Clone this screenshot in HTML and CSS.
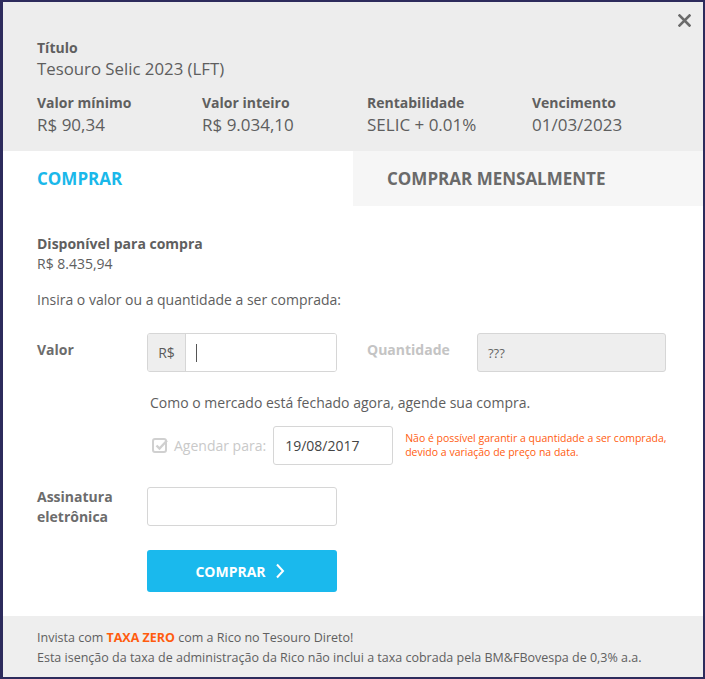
FILE: index.html
```html
<!DOCTYPE html>
<html lang="pt-BR">
<head>
<meta charset="utf-8">
<title>Comprar título</title>
<link rel="stylesheet" href="styles.css">
</head>
<body>
<div class="modal">
  <header class="head">
    <button class="close" aria-label="Fechar">
      <svg width="13" height="13" viewBox="0 0 13 13"><path d="M1.5 1.5 L11.5 11.5 M11.5 1.5 L1.5 11.5" stroke="#6b6b6b" stroke-width="2.6" stroke-linecap="square"/></svg>
    </button>
    <div class="label">Título</div>
    <div class="title">Tesouro Selic 2023 (LFT)</div>
    <div class="stats">
      <div class="stat"><div class="label">Valor mínimo</div><div class="value">R$ 90,34</div></div>
      <div class="stat"><div class="label">Valor inteiro</div><div class="value">R$ 9.034,10</div></div>
      <div class="stat"><div class="label">Rentabilidade</div><div class="value">SELIC + 0.01%</div></div>
      <div class="stat"><div class="label">Vencimento</div><div class="value">01/03/2023</div></div>
    </div>
  </header>
  <nav class="tabs">
    <div class="tab active">COMPRAR</div>
    <div class="tab">COMPRAR MENSALMENTE</div>
  </nav>
  <section class="body">
    <div class="label">Disponível para compra</div>
    <div class="text">R$ 8.435,94</div>
    <p class="intro">Insira o valor ou a quantidade a ser comprada:</p>
    <div class="row valor-row">
      <div class="field-label">Valor</div>
      <div class="input-group">
        <span class="addon">R$</span>
        <span class="input"><span class="caret"></span></span>
      </div>
      <div class="field-label qty-label">Quantidade</div>
      <div class="input disabled">???</div>
    </div>
    <p class="notice">Como o mercado está fechado agora, agende sua compra.</p>
    <div class="schedule">
      <span class="check">
        <svg width="17" height="17" viewBox="0 0 17 17"><rect x="1" y="2" width="13" height="13" rx="2" fill="none" stroke="#d0d0d0" stroke-width="2"/><path d="M4.5 8.5 L7.5 11.5 L15 3.5" fill="none" stroke="#d0d0d0" stroke-width="2.4"/></svg>
        Agendar para:
      </span>
      <div class="input date">19/08/2017</div>
      <p class="warn">Não é possível garantir a quantidade a ser comprada,<br>devido a variação de preço na data.</p>
    </div>
    <div class="row sign-row">
      <div class="field-label">Assinatura<br>eletrônica</div>
      <div class="input sign"></div>
    </div>
    <div class="row">
      <div class="field-label"></div>
      <button class="buy">COMPRAR
        <svg width="10" height="16" viewBox="0 0 10 16"><path d="M2 1.5 L8 8 L2 14.5" fill="none" stroke="#fff" stroke-width="2"/></svg>
      </button>
    </div>
  </section>
  <footer class="foot">
    <p>Invista com <strong>TAXA ZERO</strong> com a Rico no Tesouro Direto!</p>
    <p>Esta isenção da taxa de administração da Rico não inclui a taxa cobrada pela BM&amp;FBovespa de 0,3% a.a.</p>
  </footer>
</div>
</body>
</html>
```
FILE: styles.css
```css
html, body {
  margin: 0;
  padding: 0;
  background: #2d2b5c;
}
body {
  padding: 2px 2px 2px 3px;
  font-family: "Open Sans", "Liberation Sans", sans-serif;
  font-stretch: 96%;
  color: #5e5e5e;
}
.modal {
  width: 700px;
  height: 675px;
  background: #fff;
  display: flex;
  flex-direction: column;
  box-sizing: border-box;
  overflow: hidden;
}
.head {
  position: relative;
  background: #ededed;
  padding: 36px 34px 0 34px;
  height: 149px;
  box-sizing: border-box;
}
.close {
  position: absolute;
  right: 12px;
  top: 12px;
  border: 0;
  background: none;
  padding: 0;
  line-height: 0;
}
.label {
  font-weight: 700;
  font-size: 14px;
  line-height: 20px;
  color: #5f5f5f;
}
.title {
  font-size: 16.8px;
  line-height: 24px;
  margin-top: -1px;
  color: #5e5e5e;
}
.stats {
  display: flex;
  margin-top: 12px;
}
.stat {
  width: 165px;
  flex: none;
}
.stat .value {
  font-size: 17px;
  line-height: 24px;
  margin-top: 0;
}
.tabs {
  display: flex;
  height: 55px;
}
.tab {
  flex: 1;
  background: #f6f6f6;
  font-weight: 700;
  font-size: 17px;
  line-height: 55px;
  padding-left: 34px;
  color: #6a6a6a;
}
.tab.active {
  background: #fff;
  color: #1ab8ea;
}
.body {
  padding: 28px 34px 0 34px;
  flex: 1;
  font-size: 14px;
}
.text { line-height: 20px; color: #5e5e5e; }
.intro { margin: 16px 0 0; line-height: 20px; }
.row {
  display: flex;
  align-items: flex-start;
}
.valor-row { margin-top: 23px; }
.field-label {
  width: 110px;
  flex: none;
  font-weight: 700;
  font-size: 14px;
  line-height: 20px;
  color: #6c6c6c;
  padding-top: 7px;
}
.input-group {
  display: flex;
  width: 190px;
  height: 39px;
  border: 1px solid #d6d6d6;
  border-radius: 3px;
  box-sizing: border-box;
  overflow: hidden;
}
.addon {
  width: 37px;
  background: #eeeeee;
  border-right: 1px solid #d6d6d6;
  display: flex;
  align-items: center;
  justify-content: center;
  font-size: 14px;
  color: #5a5a5a;
}
.input-group .input {
  flex: 1;
  border: 0;
  border-radius: 0;
  height: auto;
  width: auto;
  padding-left: 10px;
}
.caret {
  display: inline-block;
  width: 1px;
  height: 18px;
  background: #555;
}
.input {
  height: 39px;
  border: 1px solid #d6d6d6;
  border-radius: 3px;
  box-sizing: border-box;
  display: flex;
  align-items: center;
  padding-left: 10px;
  font-size: 14px;
  color: #5a5a5a;
  background: #fff;
}
.qty-label {
  color: #c4c4c4;
  margin-left: 30px;
}
.input.disabled {
  width: 189px;
  background: #eeeeee;
  font-size: 13px;
  color: #666;
}
.notice {
  margin: 21px 0 0 113px;
  line-height: 20px;
}
.schedule {
  display: flex;
  align-items: center;
  margin: 13px 0 0 113px;
  white-space: nowrap;
}
.check {
  display: flex;
  flex: none;
  align-items: center;
  gap: 5px;
  color: #c9c9c9;
  font-size: 14px;
  padding-left: 2px;
}
.date {
  flex: none;
  width: 120px;
  margin-left: 7px;
  padding-left: 11px;
  color: #444;
}
.warn {
  flex: none;
  margin: 0 0 0 12px;
  font-size: 10.5px;
  line-height: 13.5px;
  color: #ff5c0f;
}
.sign-row { margin-top: 22px; }
.sign-row .field-label { padding-top: 0; }
.input.sign { width: 190px; }
.buy {
  margin-top: 23px;
  width: 190px;
  height: 42px;
  border: 0;
  border-radius: 3px;
  background: #1ab9ed;
  color: #fff;
  font-family: inherit;
  font-stretch: 96%;
  font-weight: 700;
  font-size: 14px;
  display: flex;
  align-items: center;
  justify-content: center;
  gap: 9px;
  padding: 0 4px 0 0;
}
.foot {
  background: #eeeeee;
  height: 61px;
  box-sizing: border-box;
  padding: 12px 34px 0;
  font-size: 12.5px;
  line-height: 20px;
  color: #606060;
}
.foot p { margin: 0; }
.foot strong { color: #ff5c0f; font-weight: 700; }
```
